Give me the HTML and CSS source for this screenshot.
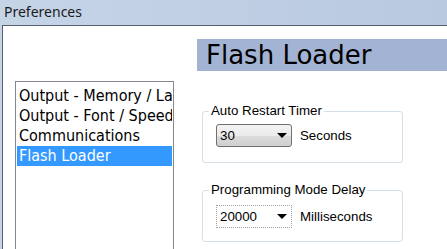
FILE: index.html
```html
<!DOCTYPE html>
<html lang="en">

<head>
    <meta charset="UTF-8">
    <title>Preferences</title>
    <link rel="stylesheet" href="styles.css">
</head>

<body>

    <div class="titlebar">Preferences</div>

    <div class="frame">
        <div class="client">

            <!-- Page list -->
            <div class="listbox">
                <div class="item">Output - Memory / Layout</div>
                <div class="item">Output - Font / Speed</div>
                <div class="item">Communications</div>
                <div class="item selected">Flash Loader</div>
            </div>

            <!-- Flash Loader page -->
            <div class="panel">
                <div class="heading">Flash Loader</div>

                <fieldset class="group">
                    <legend>Auto Restart Timer</legend>
                    <div class="row">
                        <div class="combo">
                            <span>30</span>
                            <span class="arrow"></span>
                        </div>
                        <span class="unit">Seconds</span>
                    </div>
                </fieldset>

                <fieldset class="group second">
                    <legend>Programming Mode Delay</legend>
                    <div class="row">
                        <div class="combo focused">
                            <span>20000</span>
                            <span class="arrow"></span>
                        </div>
                        <span class="unit">Milliseconds</span>
                    </div>
                </fieldset>
            </div>

        </div>
    </div>

</body>

</html>
```

FILE: styles.css
```css
body {
    margin: 0;
    width: 447px;
    height: 249px;
    overflow: hidden;
    background: linear-gradient(to right, #c6d4e8, #b9c9df);
    font-family: "Liberation Sans", Arial, sans-serif;
}

.titlebar {
    height: 25px;
    line-height: 23px;
    padding-left: 4px;
    font-family: "Noto Sans", sans-serif;
    font-size: 14px;
    color: #1b1b1b;
}

.frame {
    height: 224px;
    padding-left: 2px;
    display: flex;
}

.client {
    flex: 1;
    display: flex;
    align-items: flex-start;
    background-color: #ffffff;
    border-top: 1px solid #56606e;
    border-left: 1px solid #56606e;
}

/* list runs on below the visible window edge */
.listbox {
    flex: none;
    width: 159px;
    height: 169px;
    margin: 55px 0 0 12px;
    padding: 4px 1px;
    box-sizing: border-box;
    border: 1px solid #828790;
    border-bottom: none;
    font-family: "DejaVu Sans Condensed", "DejaVu Sans", sans-serif;
    font-stretch: condensed;
    font-size: 16px;
}

.item {
    height: 20px;
    line-height: 20px;
    padding-left: 2px;
    white-space: nowrap;
    overflow: hidden;
    color: #000000;
}

.item.selected {
    background-color: #3399ff;
    color: #ffffff;
}

.panel {
    flex: none;
    width: 260px;
    margin: 13px 0 0 23px;
}

.heading {
    height: 32px;
    line-height: 32px;
    padding-left: 9px;
    background-color: #a3b3d4;
    font-family: "DejaVu Sans", sans-serif;
    font-size: 26px;
    color: #000000;
}

.group {
    width: 201px;
    box-sizing: border-box;
    margin: 32px 0 0 5px;
    padding: 0;
    border: 1px solid #d5dfe5;
    border-radius: 3px;
}

.group legend {
    margin-left: 6px;
    padding: 0 2px;
    font-size: 13.3px;
    line-height: 16px;
}

.row {
    display: flex;
    align-items: center;
    padding: 5px 0 15px 13px;
    font-size: 13.3px;
}

.group.second {
    margin-top: 19px;
}

.group.second .row {
    padding: 7px 0 13px 13px;
}

.combo {
    width: 76px;
    height: 23px;
    box-sizing: border-box;
    display: flex;
    align-items: center;
    padding: 0 4px 0 3px;
    border: 1px solid #707070;
    border-radius: 3px;
    background: linear-gradient(#f3f3f3, #ebebeb 50%, #dddddd 50%, #cfcfcf);
}

.combo.focused {
    background: #ffffff;
    border: 1px dotted #a0a0a0;
    border-radius: 0;
}

.arrow {
    margin-left: auto;
    width: 0;
    height: 0;
    border-left: 5px solid transparent;
    border-right: 5px solid transparent;
    border-top: 5px solid #000000;
}

.unit {
    margin-left: 8px;
}
```
